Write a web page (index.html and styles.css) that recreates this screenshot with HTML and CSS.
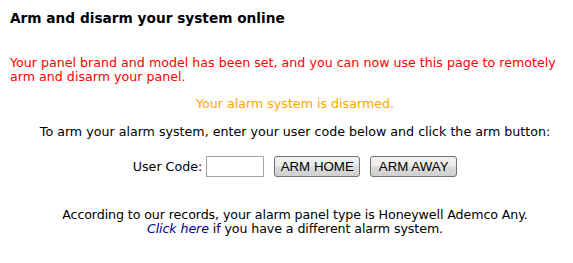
FILE: index.html
```html
<!DOCTYPE html>
<html>
<head>
<meta charset="utf-8">
<link rel="stylesheet" href="styles.css">
</head>
<body>
<div class="page">
  <h1 class="title">Arm and disarm your system online</h1>
  <p class="notice">Your panel brand and model has been set, and you can now use this page to remotely arm and disarm your panel.</p>
  <p class="status">Your alarm system is disarmed.</p>
  <p class="instr">To arm your alarm system, enter your user code below and click the arm button:</p>
  <form class="arm-row">
    <label class="code-label" for="code">User Code:</label>
    <input class="code-input" id="code" type="password">
    <button class="btn btn-home" type="button">ARM HOME</button>
    <button class="btn btn-away" type="button">ARM AWAY</button>
  </form>
  <p class="records">According to our records, your alarm panel type is Honeywell Ademco Any.<br><a class="link" href="#">Click here</a> if you have a different alarm system.</p>
</div>
</body>
</html>
```
FILE: styles.css
```css
html, body {
  margin: 0;
  padding: 0;
  background: #fff;
}
body {
  font-family: "DejaVu Sans", Verdana, sans-serif;
  font-size: 12.65px;
  color: #000;
}
.page {
  width: 570px;
  margin-left: 10px;
  padding-top: 10px;
}
.title {
  margin: 0;
  font-size: 13.7px;
  font-weight: bold;
  line-height: 16px;
}
.notice {
  margin: 30px 0 0 0;
  color: #ff0000;
  line-height: 13.5px;
}
.status {
  margin: 14px 0 0 0;
  text-align: center;
  color: #ffa500;
  line-height: 14px;
}
.instr {
  margin: 14px 0 0 0;
  text-align: center;
  line-height: 14px;
}
.arm-row {
  margin: 17px 0 0 0;
  display: flex;
  justify-content: center;
  align-items: center;
}
.code-label {
  margin-right: 4px;
}
.code-input {
  width: 58px;
  height: 21px;
  box-sizing: border-box;
  border: 1px solid #a5a5a5;
  padding: 0;
  margin: 0 10px 0 0;
}
.btn {
  font-family: "Liberation Sans", Arial, sans-serif;
  font-size: 13.3px;
  height: 21px;
  padding: 0;
  margin: 0 10px 0 0;
  border: 1px solid #707070;
  border-radius: 3px;
  background: linear-gradient(#f2f2f2, #ebebeb 50%, #dddddd 50%, #cfcfcf);
  color: #000;
  text-align: center;
}
.btn-home {
  width: 86px;
}
.btn-away {
  width: 87px;
  margin-right: 0;
}
.records {
  margin: 31px 0 0 0;
  text-align: center;
  line-height: 14px;
  letter-spacing: -0.1px;
}
.link {
  color: #000080;
  font-style: italic;
  text-decoration: none;
}
```
